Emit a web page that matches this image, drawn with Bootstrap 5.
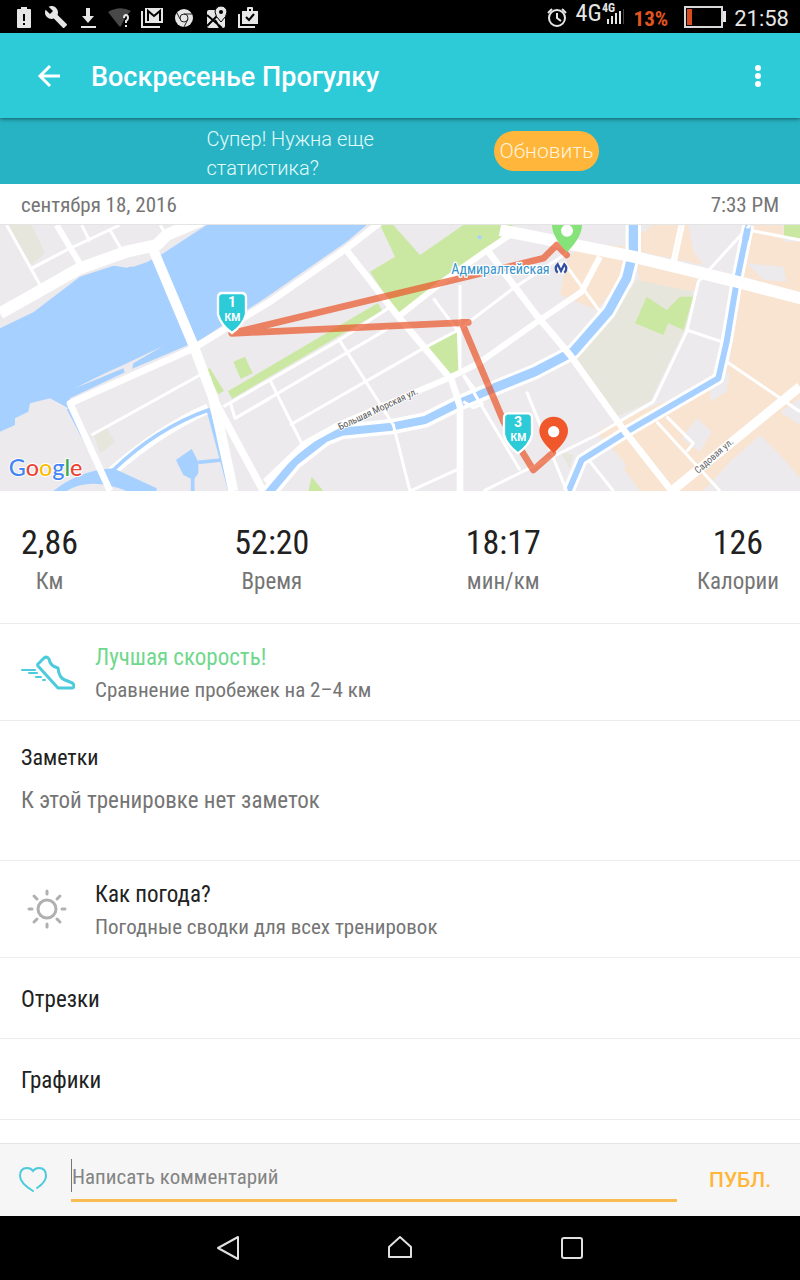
<!DOCTYPE html>
<html lang="ru">
<head>
<meta charset="utf-8">
<meta name="viewport" content="width=device-width, initial-scale=1">
<title>Воскресенье Прогулку</title>
<link href="https://cdn.jsdelivr.net/npm/bootstrap@5.3.0/dist/css/bootstrap.min.css" rel="stylesheet">
<style>
  :root { --aqua: #2dcad8; --aqua-deep: #27b3c3; --amber: #ffb63a; --muted: #757575; --ink: #212121; }
  body { font-family: "Roboto Condensed", Roboto, "Liberation Sans", sans-serif; color: var(--ink); font-size: 21px; line-height: 24px; }
  svg { display: block; flex: none; }
  .roboto { font-family: Roboto, "Liberation Sans", sans-serif; }
  .px-page { padding-left: 21px; padding-right: 21px; }
  .text-dim { color: var(--muted); }
  .statusbar { height: 33px; background: #000; color: #e6e6e6; padding: 0 11px 0 12px; }
  .statusbar .network { font-size: 24px; line-height: 24px; }
  .statusbar .charge { color: #e2551f; font-weight: 700; }
  .statusbar .clock { font-size: 22px; }
  .appbar { height: 85px; background: var(--aqua); padding: 2px 27px 0 33px; box-shadow: 0 1px 4px rgba(0,0,0,.5); z-index: 2; }
  .appbar h1 { font-size: 27px; font-weight: 500; line-height: 32px; color: #fff; padding-left: 26px; }
  .bare { background: none; border: 0; padding: 0; }
  .promo { height: 66px; background: var(--aqua-deep); color: #e3fafc; font-weight: 300; line-height: 29px; font-size: 20px; padding-left: 6px; }
  .promo p { width: 191px; padding-top: 5px; }
  .promo button { background: var(--amber); color: #fff3dc; font-weight: 300; font-size: 21px; line-height: 24px; border-radius: 20px; padding: 8px 6px; }
  .dateline { height: 41px; border-bottom: 1px solid #e4e4e4; padding-top: 2px; }
  .map-canvas { width: 100%; height: 266px; }
  .metrics { padding-top: 31px; padding-bottom: 25px; }
  .metrics dd { font-size: 34px; line-height: 40px; }
  .metrics dt, .entry-title, .note-text { font-size: 23px; line-height: 32px; font-weight: 400; }
  .metrics dt { padding-top: 4px; }
  .entry { border-top: 1px solid #ececec; }
  .entry-media { padding-top: 18px; padding-bottom: 16px; }
  .entry-media svg { width: 54px; height: 54px; }
  .entry-media p { line-height: 28px; padding-top: 2px; }
  .notes { padding-top: 21px; padding-bottom: 43px; }
  .notes-title { font-size: 22px; line-height: 32px; font-weight: 400; }
  .note-text { padding-top: 11px; }
  .fold { min-height: 81px; padding-top: 4px; text-decoration: none; color: var(--ink); font-size: 23px; }
  .best { color: #6fd88c; }
  .composer { min-height: 73px; background: #f6f6f6; border-top: 1px solid #e6e6e6; padding: 0 29px 0 19px; }
  .field-line { border-bottom: 3px solid #f9bc50; margin: 0 32px 0 24px; height: 43px; }
  .field-line input { background: none; border: 0; border-left: 1px solid #777; border-radius: 0; padding: 4px 0 0; width: 100%; height: 33px; outline: 0; font-size: 21px; color: var(--ink); }
  .field-line input::placeholder { color: #848484; opacity: 1; }
  .send { color: var(--amber); font-weight: 500; font-size: 21px; }
  .softkeys { height: 64px; background: #000; gap: 148px; }
</style>
</head>
<body class="min-vh-100 d-flex flex-column bg-white">

<header>
  <div class="statusbar d-flex align-items-center justify-content-between">
    <div class="d-flex align-items-center gap-2">
      <svg width="24" height="24" viewBox="0 0 24 24" fill="#e6e6e6"><path d="M9 2h6v2h3q1 0 1 1v17q0 1-1 1H6q-1 0-1-1V5q0-1 1-1h3z"/><path d="M11 9h2v7h-2zM11 18h2v2h-2z" fill="#000"/></svg>
      <svg width="24" height="24" viewBox="0 0 24 24" fill="#e6e6e6"><path d="M22.700 19l-9.100-9.100c.900-2.300.400-5-1.500-6.900-2-2-5-2.400-7.400-1.300L9 6 6 9 1.600 4.700C.400 7.100.900 10.100 2.900 12.100c1.900 1.900 4.600 2.400 6.900 1.500l9.100 9.100c.400.400 1 .400 1.400 0l2.300-2.300c.500-.400.500-1.100.100-1.400z"/></svg>
      <svg width="24" height="24" viewBox="0 0 24 24" fill="#e6e6e6"><path d="M10 3h4v8h4l-6 7-6-7h4zM5 21h15v2H5z"/></svg>
      <svg width="24" height="24" viewBox="0 0 24 24"><path d="M0 7Q12 0 23 6l-5 5-5 10q-1 1-2 0z" fill="#484848"/><path d="M16 13q0-3 2-3t2 3q0 2-2 3v2M17 21h2" stroke="#e6e6e6" stroke-width="2" fill="none"/></svg>
      <svg width="24" height="24" viewBox="0 0 24 24"><path d="M2 6v16h18" stroke="#e6e6e6" stroke-width="2" fill="none"/><path d="M5 3h18v15H5z" fill="#e6e6e6"/><path d="M8 16V6l6 5 6-5v10" stroke="#000" stroke-width="2" fill="none"/></svg>
      <svg width="24" height="24" viewBox="0 0 24 24"><circle cx="12" cy="13" r="9" fill="#e6e6e6"/><g fill="none" stroke="#222" stroke-width="1"><circle cx="12" cy="13" r="4"/><path d="M12 9h8M8 14L5 8M16 14l-4 8"/></g></svg>
      <svg width="24" height="24" viewBox="0 0 24 24"><rect x="3" y="5" width="18" height="18" rx="2" fill="#e6e6e6"/><path d="M3 10l15 13M3 21L15 9M11 15l5 8" stroke="#000" stroke-width="2" fill="none"/><path d="M17 17q-6-6-6-10a6 6 0 0112 0q0 4-6 10z" fill="#e6e6e6" stroke="#000"/><circle cx="17" cy="7" r="2" fill="#000"/></svg>
      <svg width="24" height="24" viewBox="0 0 24 24"><path d="M3 9v13h16" stroke="#e6e6e6" stroke-width="2" fill="none"/><path d="M6 6h5V3q0-1 1-1h4q1 0 1 1v3h5v13H6zm7-2v2h2V4z" fill="#e6e6e6"/><path d="M10 12l3 3 5-6" stroke="#000" stroke-width="2" fill="none"/></svg>
    </div>
    <div class="d-flex align-items-center">
      <svg class="me-2" width="22" height="24" viewBox="0 0 22 24" fill="none" stroke="#e6e6e6" stroke-width="2"><circle cx="11" cy="13" r="8"/><path d="M11 8v5l4 3M2 8l4-4M20 8l-4-4"/></svg>
      <span class="network mb-2">4G</span>
      <svg class="me-2" width="24" height="32" viewBox="0 0 24 32"><text x="0" y="11" font-size="12" font-weight="700" fill="#e6e6e6">4G</text><g fill="#e6e6e6"><path d="M5 18h2v5H5zM9 15h2v8H9zM13 12h2v11h-2zM17 10h2v13h-2z"/></g><path d="M21 8h1v15h-1z" fill="#444"/></svg>
      <span class="charge me-3 pt-1">13%</span>
      <svg width="42" height="24" viewBox="0 0 42 24"><path d="M1 2h37v20H1z" fill="none" stroke="#d8d8d8" stroke-width="2"/><path d="M39 6h3v11h-3z" fill="#e6e6e6"/><path d="M3 4h5v16H3z" fill="#d84b20"/></svg>
      <span class="clock roboto ms-2 pt-1">21:58</span>
    </div>
  </div>
  <nav class="appbar d-flex align-items-center position-relative">
    <button class="bare" aria-label="Назад"><svg width="32" height="32" viewBox="0 0 32 32" fill="none" stroke="#fff" stroke-width="3"><path d="M27 15H7M17 5L7 15l10 10"/></svg></button>
    <h1 class="roboto flex-grow-1 mb-0">Воскресенье Прогулку</h1>
    <button class="bare" aria-label="Меню"><svg width="32" height="32" viewBox="0 0 32 32" fill="#fff"><circle cx="17" cy="7" r="3"/><circle cx="17" cy="15" r="3"/><circle cx="17" cy="23" r="3"/></svg></button>
  </nav>
  <div class="promo roboto d-flex align-items-center justify-content-center">
    <p class="mb-0 me-5">Супер! Нужна еще статистика?</p>
    <button class="bare ms-5">Обновить</button>
  </div>
</header>

<main class="flex-grow-1">
  <div class="dateline px-page d-flex align-items-center justify-content-between text-dim">
    <span>сентября 18, 2016</span><span>7:33 PM</span>
  </div>

  <svg class="map-canvas" viewBox="0 0 2400 798" preserveAspectRatio="xMidYMid slice" role="img" aria-label="Карта маршрута">
    <rect width="2400" height="798" fill="#eceaed"/>
    <!-- commercial blocks -->
    <g fill="#f8e4d1">
      <path d="M1740 55L1890 65V130L1790 255 1680 210 1700 110zM1910 110L2020 120 2090 160V200L1920 175zM1905 0H2065L2080 80 2110 120 1920 80zM2250 0H2350V50H2400V210L2220 150zM2215 180L2400 225V798H1920L1790 620 1890 570 2155 470 2190 410z"/>
    </g>
    <g fill="#eceaed">
      <path d="M2280 630L2350 700 2400 760V798H2110L2190 710zM2090 580L2135 620 2100 680 2045 640zM2130 480L2190 440 2180 500 2130 530zM2340 560L2400 520V600zM2240 115L2350 125 2360 170 2290 165zM1905 0h50l-20 20h-30zM1700 700L1810 640 1880 720 1850 760 1900 798H1700z"/>
    </g>
    <path d="M1910 165L2080 200 2070 280 1950 530 1840 580 1730 400 1820 300zM20 0H95L135 85 95 120zM280 625L320 610 345 650 300 685zM1680 680L1720 690 1710 730z" fill="#e7e6dc"/>
    <g fill="#cbe8a3">
      <path d="M1140 0H1180L1260 90 1390 0H1540L1450 90 1190 268 1165 225 1110 140 1185 95zM1285 365L1370 312 1380 440 1345 447zM1940 215L2000 255 2040 215H2080L2050 315 2005 295 1990 330 1905 295zM2352 0H2400V40L2352 34zM700 410L735 395 758 445 722 462zM615 435L630 430 672 498 655 508zM925 798L935 755 970 798z"/>
      <path d="M690 510L1140 245" fill="none" stroke="#cbe8a3" stroke-width="26"/>
    </g>
    <!-- river -->
    <path d="M0 310L100 262 240 155 340 122 400 125 440 112 490 85 620 0H1100L1040 50 795 220 600 345 400 430 210 520 205 550 150 520 90 535 85 560 45 580V600L0 620z" fill="#a6d0ff"/>
    <path d="M225 490Q300 450 370 420L490 362 400 415 395 440 375 445 370 430z" fill="#eceaed"/>
    <path d="M330 120L380 128 430 112 400 98z" fill="#eceaed"/>
    <!-- canals with white banks -->
    <g fill="none" stroke-linejoin="round">
      <g stroke="#fff">
        <path d="M805 805L885 710 975 640 1025 620 1175 605 1275 585 1375 535 1495 485 1605 440 1720 380 1825 260 1880 160 1900 80V0" stroke-width="46"/>
        <path d="M2245 0L2210 170 2180 350 2155 460 1880 620 1745 705 1705 800" stroke-width="36"/>
        <path d="M330 745Q470 620 625 550" stroke-width="30"/>
      </g>
      <g stroke="#a6d0ff">
        <path d="M805 805L885 710 975 640 1025 620 1175 605 1275 585 1375 535 1495 485" stroke-width="24"/>
        <path d="M1480 490L1605 440 1720 380 1825 260 1880 160 1900 80V0" stroke-width="28"/>
        <path d="M2245 0L2210 170 2180 350 2155 460 1880 620 1745 705 1705 800" stroke-width="18"/>
        <path d="M205 550L310 750M340 735Q470 610 625 555L690 798M595 712L665 705M578 760V798" stroke-width="11"/>
      </g>
      <path d="M160 798Q240 735 340 730L470 790V798H380Q270 755 200 798zM528 705L575 672 595 710 595 745 580 765 550 750z" fill="#a6d0ff"/>
    </g>
    <!-- streets -->
    <g fill="none" stroke="#fff" stroke-linejoin="round">
      <path d="M20 0L120 180M95 130L200 75 360 0M245 0L270 50M330 15L365 75M480 0L500 30M275 630L600 450M690 530L705 580 810 520M670 545L1010 350 1165 250M705 580L1165 310M810 465L905 655M870 600L1270 370 1375 315 1540 190 1700 85M1015 340L1180 600 1230 798M1300 220L1375 320 1380 440M1380 180V440M1230 798L1380 730M1390 450L1560 735M1450 798L1790 630 1960 530 2060 320 2095 170 2250 0M2060 315L2165 350M1690 110L1800 260M2040 0L2015 115M2050 0L2025 115M2245 15L2400 45M2180 410L2400 560M1970 590L2160 798M2000 575L2080 655 2060 680M1770 710L1840 798M1580 500L1700 798" stroke-width="9"/>
      <path d="M0 265L240 130 380 80 470 60 500 30 640-30" stroke-width="36"/>
      <path d="M170 0L245 125" stroke-width="18"/>
      <path d="M460 75L580 360 640 520 700 798" stroke-width="30"/>
      <path d="M640 520L790 798" stroke-width="22"/>
      <path d="M330 798L210 535 580 370 810 230 1040 70 1150-15" stroke-width="20"/>
      <path d="M1035 70L1195 275 1355 465 1380 545V798" stroke-width="20"/>
      <path d="M1195 275L1335 165 1455 80 1545 20M795 770L915 655 1015 600 1355 455 1435 415 1605 295 1745 200 1800 95" stroke-width="18"/>
      <path d="M1465 80L1605 265 1710 390 1875 620 2015 798" stroke-width="20"/>
      <path d="M1500 15L1600 35 1900 95 2210 170 2410 222" stroke-width="36"/>
      <path d="M2015 798L2400 485" stroke-width="28"/>
      <path d="M1390 530L1420 548 1450 535M1390 450L1430 500" stroke-width="10"/>
    </g>
    <circle cx="1439" cy="37" r="6" fill="#a6d0ff"/>
    <path d="M1902 0V48M2243 10L2236 45" fill="none" stroke="#a6d0ff" stroke-width="20"/>
    <!-- route -->
    <path d="M1700 90L1670 60 1630 100 695 325 1405 292H1385L1511 590 1600 735 1658 684" fill="none" stroke="#e95427" stroke-opacity=".7" stroke-width="20" stroke-linejoin="round" stroke-linecap="round"/>
    <!-- labels -->
    <g font-family="Roboto Condensed, Roboto, sans-serif" stroke="#fff" paint-order="stroke" stroke-linejoin="round">
      <text x="1354" y="147" font-size="42" fill="#3593cc" stroke-width="8">Адмиралтейская</text>
      <text transform="translate(1020 616) rotate(-25)" font-size="29" fill="#555" stroke-width="5">Большая Морская ул.</text>
      <text transform="translate(2094 747) rotate(-41)" font-size="29" fill="#666" stroke-width="5">Садовая ул.</text>
    </g>
    <!-- metro sign -->
    <ellipse cx="1683" cy="130" rx="20" ry="17" fill="#fff"/>
    <path d="M1673 143Q1661 130 1673 118L1683 138 1693 118Q1705 130 1693 143" fill="none" stroke="#3450a0" stroke-width="7"/>
    <text x="26" y="752" font-family="Lato, sans-serif" font-size="70" stroke="#fff" stroke-width="6" paint-order="stroke" font-weight="500"><tspan fill="#4285f4">G</tspan><tspan fill="#ea4335">o</tspan><tspan fill="#fbbc05">o</tspan><tspan fill="#4285f4">g</tspan><tspan fill="#34a853">l</tspan><tspan fill="#ea4335">e</tspan></text>
    <!-- pins -->
    <g>
      <path d="M1701 82Q1656 35 1656 0A45 45 0 011746 0Q1746 35 1701 82z" fill="#86e37a"/><circle cx="1701" cy="17" r="18" fill="#fff"/>
      <path d="M1661 684Q1618 645 1618 618A43 43 0 011704 618Q1704 645 1661 684z" fill="#f0582b"/><circle cx="1661" cy="620" r="17" fill="#fff"/>
    </g>
    <g font-family="Roboto, sans-serif" font-weight="700" text-anchor="middle" fill="#fff">
      <path d="M667 204H724Q738 204 738 218V268Q730 300 696 324 662 300 654 268V218Q654 204 667 204z" fill="#2dcad8" stroke="#fff" stroke-width="7"/>
      <text x="696" y="246" font-size="42">1</text><text x="697" y="288" font-size="31">КМ</text>
      <path d="M1525 565H1582Q1596 565 1596 579V629Q1588 661 1554 685 1520 661 1512 629V579Q1512 565 1525 565z" fill="#2dcad8" stroke="#fff" stroke-width="7"/>
      <text x="1554" y="606" font-size="42">3</text><text x="1555" y="648" font-size="31">КМ</text>
    </g>
  </svg>

  <dl class="metrics px-page d-flex justify-content-between text-center mb-0">
    <div class="d-flex flex-column-reverse"><dt class="text-dim">Км</dt><dd class="mb-0">2,86</dd></div>
    <div class="d-flex flex-column-reverse"><dt class="text-dim">Время</dt><dd class="mb-0">52:20</dd></div>
    <div class="d-flex flex-column-reverse"><dt class="text-dim">мин/км</dt><dd class="mb-0">18:17</dd></div>
    <div class="d-flex flex-column-reverse"><dt class="text-dim">Калории</dt><dd class="mb-0">126</dd></div>
  </dl>

  <section class="entry entry-media px-page d-flex align-items-center">
    <svg viewBox="0 0 54 54" fill="none" stroke="#4bcbdc" stroke-width="3" stroke-linecap="round" stroke-linejoin="round"><path d="M17 20q-1-2 1-3l5-5q3-2 5 1 1 7 9 9 1 10 7 12l5 2q4 1 4 4 0 2-3 2H37z"/><path d="M1 24h13M8 27h8M15 31h5" stroke-width="2"/><path d="M22 34h2" stroke-width="2"/></svg>
    <div class="ms-3 ps-1">
      <h2 class="entry-title best mb-0">Лучшая скорость!</h2>
      <p class="text-dim mb-0">Сравнение пробежек на 2–4 км</p>
    </div>
  </section>

  <section class="entry notes px-page">
    <h2 class="notes-title mb-0">Заметки</h2>
    <p class="note-text text-dim mb-0">К этой тренировке нет заметок</p>
  </section>

  <section class="entry entry-media px-page d-flex align-items-center">
    <svg viewBox="0 0 54 54" fill="none" stroke="#b0b0b0" stroke-width="4"><circle cx="26" cy="26" r="9" stroke-width="3"/><path d="M26 8v3M26 41v3M8 26h3M41 26h3M13 13l3 3M36 36l3 3M39 13l-3 3M16 36l-3 3" stroke-linecap="round" stroke-width="3"/></svg>
    <div class="ms-3 ps-1">
      <h2 class="entry-title mb-0">Как погода?</h2>
      <p class="text-dim mb-0">Погодные сводки для всех тренировок</p>
    </div>
  </section>

  <a href="#" class="entry fold px-page d-flex align-items-center">Отрезки</a>
  <a href="#" class="entry fold px-page d-flex align-items-center">Графики</a>
  <div class="entry"></div>
</main>

<footer>
  <form class="composer d-flex align-items-center">
    <button type="button" class="bare" aria-label="Нравится"><svg width="28" height="28" viewBox="0 0 28 28" fill="none" stroke="#4bcbdc" stroke-width="2" stroke-linecap="round"><path d="M14 25Q1 17 1 10 1 2 8 2q4 0 6 3 2-3 6-3 7 0 7 8 0 6-9 12"/></svg></button>
    <div class="field-line flex-grow-1"><input type="text" placeholder="Написать комментарий" aria-label="Написать комментарий"></div>
    <button type="submit" class="bare send roboto">ПУБЛ.</button>
  </form>
  <div class="softkeys d-flex align-items-center justify-content-center">
    <button class="bare" aria-label="Назад"><svg width="24" height="26" viewBox="0 0 24 26" fill="none" stroke="#e0e0e0" stroke-width="2" stroke-linejoin="round"><path d="M22 2v22L2 13z"/></svg></button>
    <button class="bare" aria-label="Домой"><svg width="24" height="26" viewBox="0 0 24 26" fill="none" stroke="#e0e0e0" stroke-width="2" stroke-linejoin="round"><path d="M1 12L12 2l11 10v10H1z"/></svg></button>
    <button class="bare" aria-label="Недавние"><svg width="24" height="26" viewBox="0 0 24 26" fill="none" stroke="#e0e0e0" stroke-width="2"><rect x="2" y="3" width="20" height="20" rx="2"/></svg></button>
  </div>
</footer>

<script src="https://cdn.jsdelivr.net/npm/bootstrap@5.3.0/dist/js/bootstrap.bundle.min.js"></script>
</body>
</html>
